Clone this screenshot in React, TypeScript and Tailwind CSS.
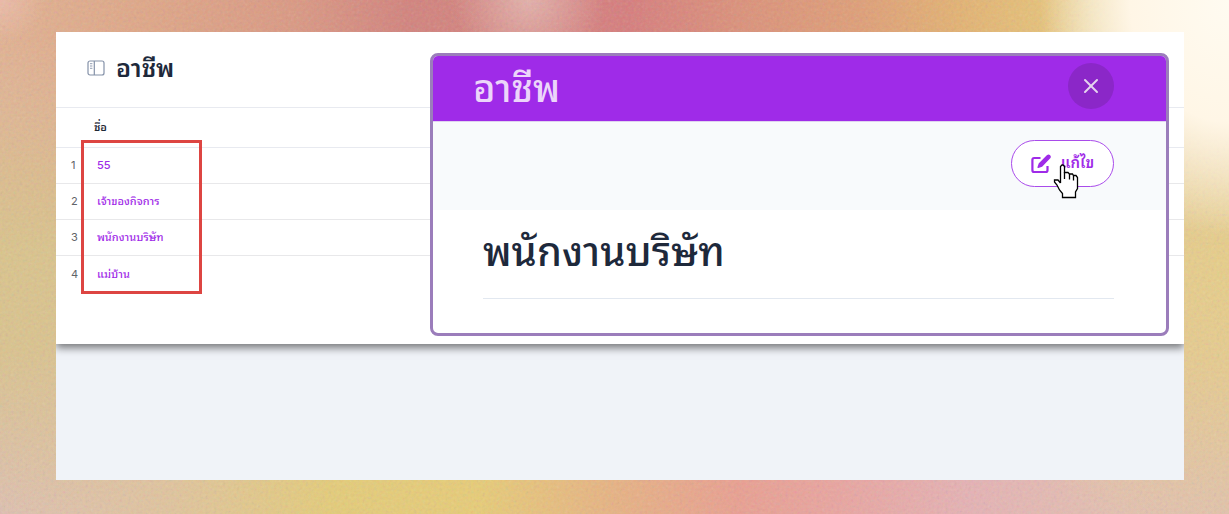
import { LuX } from "react-icons/lu";

const occupations = ["55", "เจ้าของกิจการ", "พนักงานบริษัท", "แม่บ้าน"];

function PanelIcon() {
  return (
    <svg className="h-4 w-[18px] shrink-0" viewBox="0 0 18 16" fill="none" stroke="#8491a8" aria-hidden="true">
      <rect x="1" y="1" width="16" height="14" rx="2" strokeWidth="1.2" />
      <path d="M7.3 1v14" strokeWidth="1.2" />
      <path d="M3 3.700h2.400M3 6h2.400M3 8.300h2.400" strokeWidth="0.9" />
    </svg>
  );
}

function EditIcon() {
  return (
    <svg className="size-5 shrink-0" viewBox="0 0 20 20" fill="none" aria-hidden="true">
      <path d="M9.500 4H3.200A1.800 1.800 0 0 0 1.400 5.800v10.400A1.800 1.800 0 0 0 3.200 18h11.500a1.800 1.800 0 0 0 1.800-1.800V12" stroke="#9f2be8" strokeWidth="2.200" />
      <path d="M16.600 1.600a1.500 1.500 0 0 1 2.100 2.100l-7.900 8.300-3.600 1.300 1.200-3.500Z" fill="#9f2be8" stroke="#9f2be8" strokeWidth="1.500" strokeLinejoin="round" />
    </svg>
  );
}

function HandCursor() {
  return (
    <svg className="pointer-events-none absolute left-10 top-[22px] h-9 w-7" viewBox="0 0 28 36" aria-hidden="true">
      <path
        d="M8.500 20V3.500L10 2h1l1.500 1.500v6h3.500l1.500 1.500h3l1 1.500h2.500l1.500 2v11l-2 3.500v5.500h-13v-4l-3-3.500-2.500-5-2.500-3v-2H6l2.500 3"
        fill="#fff" stroke="#000" strokeWidth="1.300" />
      <path d="M12.500 9v7M17.500 11v5.500M21.500 12.500v5" stroke="#000" strokeWidth="1.300" />
    </svg>
  );
}

function Backdrop() {
  return (
    <div aria-hidden="true" className="absolute inset-0 -z-10 bg-[linear-gradient(90deg,#dfc0b0_0%,#e1c49c_14%,#e5cc78_27%,#e8cc76_39%,#e8b282_50%,#ea9f90_60%,#eaa49f_68%,#e6b2b4_79%,#e4c0b0_91%,#e2c2ae_100%)]">
      <div className="absolute inset-0 bg-[radial-gradient(ellipse_300px_270px_at_100%_52%,#e8ce88_0%,#e7cb8e_35%,transparent_100%),radial-gradient(ellipse_300px_260px_at_0%_50%,#dbc48b_0%,#dbc38d_35%,transparent_100%)]" />
      <div className="absolute inset-0 bg-[linear-gradient(90deg,#e2b190_0%,#e0a686_12%,#db9882_24%,#d3827c_33%,#d4817d_42%,#d77c7c_51%,#dc9079_60%,#e09e76_70%,#e4b271_78%,#e7c278_85%,#ead496_89%,#f0dcaa_100%)] [mask-image:linear-gradient(180deg,#000_0%,#000_8%,transparent_48%)]" />
      <div className="absolute inset-0 bg-[radial-gradient(circle_at_0px_0px,#edbba8_0px,transparent_44px),radial-gradient(circle_at_43%_0px,#e4b0aa_0px,transparent_76px)]" />
      <svg className="absolute inset-0 h-full w-full opacity-20">
        <filter id="grain">
          <feTurbulence type="fractalNoise" baseFrequency="0.35" numOctaves="2" />
        </filter>
        <rect width="100%" height="100%" filter="url(#grain)" />
      </svg>
      <div className="absolute inset-0 bg-[radial-gradient(ellipse_190px_235px_at_100%_0px,#fffbf1_0%,#fff6e6_52%,transparent_100%)]" />
    </div>
  );
}

function OccupationDialog() {
  return (
    <section
      role="dialog"
      aria-labelledby="dialog-title"
      className="absolute bottom-2 left-[374px] right-[15px] top-[21px] flex flex-col overflow-hidden rounded-lg border-[3px] border-[#9b7dbb] bg-white"
    >
      <header className="flex h-[66px] items-start justify-between border-b border-[#dfd3ef] bg-[#9f2be8] pl-10 pr-[52px] pt-[7px]">
        <h2 id="dialog-title" className="text-[38px] font-medium leading-[50px] text-[#ecd5fa]">อาชีพ</h2>
        <button type="button" aria-label="ปิด" className="flex size-[46px] items-center justify-center rounded-full bg-[#8b27c8] text-[#e5d4ee]">
          <LuX className="size-6" />
        </button>
      </header>
      <div className="flex h-[88px] items-start justify-end bg-[#f8fafc] pr-[52px] pt-[18px]">
        <button type="button" className="relative flex h-[47px] w-[103px] items-center justify-center gap-2.5 rounded-full border border-[#a94bea] bg-white text-[15px] font-semibold text-[#9f2be8]">
          <EditIcon />
          แก้ไข
          <HandCursor />
        </button>
      </div>
      <div className="pl-[50px] pr-[52px] pt-[14px]">
        <h3 className="border-b border-[#e2e8f0] pb-[18px] text-[40px] font-medium leading-[56px] text-[#1e293b]">พนักงานบริษัท</h3>
      </div>
    </section>
  );
}

export default function App() {
  return (
    <div className="relative isolate min-h-screen pb-[34px] pl-14 pr-[45px] pt-8 font-['Inter','Noto_Sans_Thai_Looped','Loma','Waree','Garuda',sans-serif]">
      <Backdrop />
      <main className="bg-[#f0f3f8] pb-[136px]">
        <div className="relative bg-white pb-[52px] shadow-[0_4px_8px_rgba(0,0,0,0.5)] [clip-path:inset(0_0_-24px_0)]">
          <header className="flex h-[75px] items-center gap-[11px] pb-1 pl-[31px]">
            <PanelIcon />
            <h1 className="text-[25px] font-semibold leading-8 text-[#1e293b]">อาชีพ</h1>
          </header>
          <div className="relative">
            <table className="w-full border-collapse text-left text-[11px]">
              <thead>
                <tr className="h-10 border-y border-[#e8eaf0]">
                  <th className="w-[38px]" aria-label="ลำดับ" />
                  <th className="font-semibold text-[#1f2937]">ชื่อ</th>
                </tr>
              </thead>
              <tbody>
                {occupations.map((name, i) => (
                  <tr key={name} className="h-9 border-b border-[#e8e8ea] last:border-b-0">
                    <td className="pl-[15px] text-[#5f6368]">{i + 1}</td>
                    <td className="pl-[3px] font-medium text-[#9f2be8]"><a href="#detail">{name}</a></td>
                  </tr>
                ))}
              </tbody>
            </table>
            <div aria-hidden="true" className="pointer-events-none absolute -bottom-0.5 left-[25px] top-[33px] w-[121px] border-[3px] border-[#dd4542]" />
          </div>
          <OccupationDialog />
        </div>
      </main>
    </div>
  );
}
